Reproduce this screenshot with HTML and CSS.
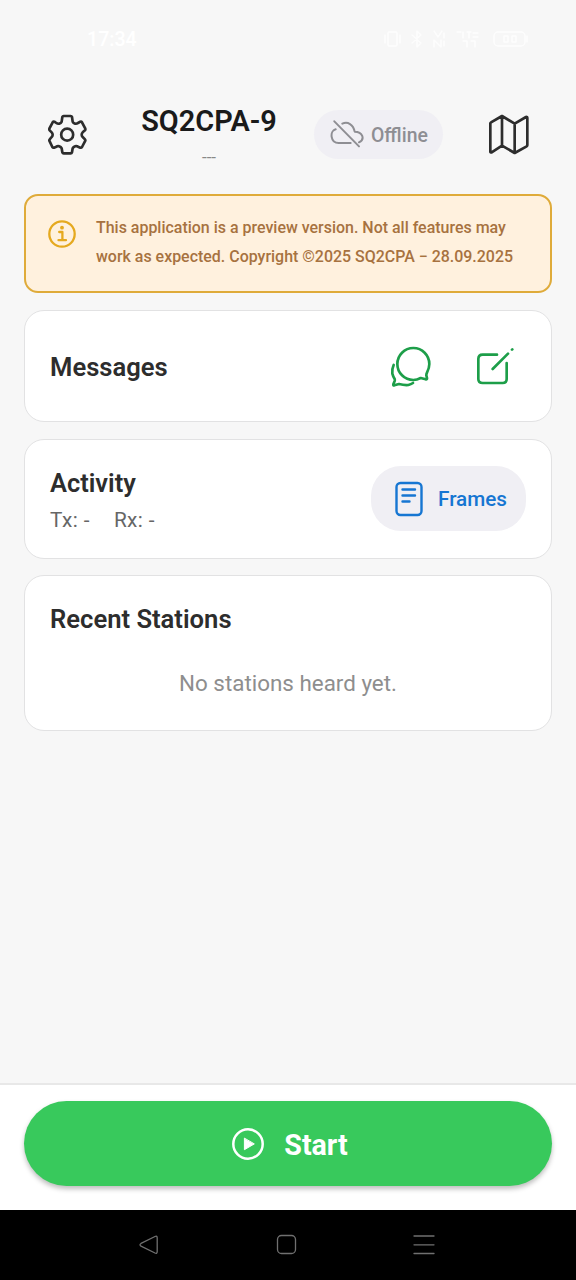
FILE: index.html
```html
<!DOCTYPE html>
<html lang="en">
<head>
<meta charset="utf-8">
<title>SQ2CPA-9</title>
<link rel="stylesheet" href="styles.css">
</head>
<body>
<div class="status">
  <span class="clock">17:34</span>
  <svg class="status-icons" width="150" height="24" viewBox="0 0 150 24" fill="none" stroke="currentColor" stroke-width="1.4">
    <rect x="8" y="5" width="9" height="14" rx="1"/><path d="M5 8v8M20 8v8M32 8l9 8-4 4V4l4 4-9 8"/>
    <path d="M54 4l4 6 4-6M54 20v-7l7 7v-7M64 6v5M64 14v5M77 5h4M83 5v6M87 5h4M89 5v6M93 6h5M93 10h5M83 14h4v6M91 14h4v6"/>
    <rect x="114" y="5" width="31" height="14" rx="4"/><path d="M147 9v6M124 9v6h4V9zM132 9v6h4V9z"/>
  </svg>
</div>
<header class="header">
  <svg class="gear" width="41" height="42" viewBox="51 71 123 126">
    <path d="M101 77H122Q125 77 126 80L128 94Q130 99 135 100Q140 101 144 98L151 94Q154 93 156 96L166 115Q167 118 165 120L158 126Q155 129 155 133Q155 137 158 140L165 147Q167 149 166 151L156 170Q154 173 151 172L144 169Q140 166 135 168Q130 169 128 174L126 186Q125 189 122 189H101Q98 189 97 186L95 174Q93 169 88 168Q83 166 79 169L72 172Q69 173 67 170L58 151Q57 149 59 147L65 140Q68 137 68 133Q68 129 65 126L59 120Q57 118 58 115L68 96Q70 93 73 94L79 98Q83 101 88 100Q93 99 95 94L97 80Q98 77 101 77Z"/>
    <circle cx="111.500" cy="133" r="18"/>
  </svg>
  <div class="identity"><h1 class="callsign">SQ2CPA-9</h1><span class="dashes">---</span></div>
  <div class="offline">
    <svg width="34" height="30" viewBox="90 91 102 90">
      <path d="M107 119C88 124 91 160 116 160H152M127 102C143 95 160 104 164 126C188 126 196 149 177 158M103 95L177 170"/>
    </svg>
    <span>Offline</span>
  </div>
  <svg class="map" width="42" height="42" viewBox="565 71 126 126">
    <path d="M572 99Q572 97 574 96L607 77L645 100L679 80Q683 79 683 83V165Q683 167 681 168L645 188L607 166L576 186Q572 187 572 184ZM607 77V166M645 100V188"/>
  </svg>
</header>
<main class="content">
  <section class="notice">
    <svg class="info" width="28" height="28" viewBox="0 0 28 28"><circle cx="14" cy="14" r="12.700"/><path d="M11.200 12h3.200v8M10.500 20.200h7.500"/><circle class="dot" cx="14" cy="7.700" r="1.900"/></svg>
    <p>This application is a preview version. Not all features may<br>work as expected. Copyright ©2025 SQ2CPA − 28.09.2025</p>
  </section>
  <section class="card messages">
    <h2>Messages</h2>
    <div class="actions">
      <svg width="42" height="42" viewBox="63 43 126 126">
        <path d="M174 123Q181 109 181 97A48 48 0 1 0 133 145Q144 145 155 139L170 143Q175 144 174 139L172 131Q172 127 174 123M74 100Q68 113 70 126Q72 134 77 142Q78 145 77 148L73 158Q72 162 76 161L90 157Q105 161 118 160Q126 158 132 154"/>
      </svg>
      <svg width="42" height="42" viewBox="317 47 126 126">
        <path d="M383 73H340Q327 73 327 86V146Q327 158 340 158H400Q412 158 412 146V98M370 116L416 70M428 58L429 57"/>
      </svg>
    </div>
  </section>
  <section class="card activity">
    <div class="summary"><h2>Activity</h2><div class="counts"><span>Tx: -</span><span>Rx: -</span></div></div>
    <div class="frames">
      <svg width="28" height="36" viewBox="0 0 28 36"><rect x="1.500" y="2" width="25" height="32" rx="4"/><path d="M7.500 8.500h12.500M7.500 14.500h12.500M7.500 20.500h7"/></svg>
      <span>Frames</span>
    </div>
  </section>
  <section class="card stations"><h2>Recent Stations</h2><p>No stations heard yet.</p></section>
</main>
<footer class="footer">
  <div class="start">
    <svg width="32" height="32" viewBox="0 0 32 32"><circle cx="16" cy="16" r="14.700"/><path d="M12.400 10.500v11.200l9.600-5.600z"/></svg>
    <span>Start</span>
  </div>
</footer>
<nav class="nav">
  <svg width="330" height="70" viewBox="0 0 330 70"><path d="M21 33.400L35 26.500Q37.200 25.500 37.200 28V41.500Q37.200 44 35 43L21 36.200Q19 34.900 21 33.400Z"/><rect x="157.500" y="25.500" width="18" height="18" rx="4"/><path d="M294 26h20M294 34.800h20M294 43.500h20"/></svg>
</nav>
</body>
</html>
```

FILE: styles.css
```css
* { box-sizing: border-box; }
body {
  margin: 0;
  height: 1280px;
  display: flex;
  flex-direction: column;
  background: #f7f7f7;
  color: #2d2d2d;
  font-family: Roboto, "Noto Sans", sans-serif;
}
h1, h2, p { margin: 0; }
svg { display: block; flex: none; fill: none; stroke-linecap: round; stroke-linejoin: round; }
.status {
  height: 76px;
  padding: 2px 46px 0 87px;
  display: flex;
  align-items: center;
  justify-content: space-between;
  color: #fff;
}
.status-icons { opacity: .85; }
.clock { font-size: 19.6px; font-weight: 500; }
.header { height: 118px; padding: 0 46px 0 47px; display: flex; align-items: flex-start; }
.gear, .map { stroke: #2d2d2d; stroke-width: 8; margin-top: 38px; }
.identity { width: 136px; margin: 27px 0 0 53px; display: flex; flex-direction: column; align-items: center; }
.callsign { font-size: 28.9px; line-height: 37px; font-weight: 600; color: #1a1a1a; white-space: nowrap; }
.dashes { font-size: 17px; line-height: 20px; margin-top: 7px; color: #888; }
.offline {
  width: 129px;
  height: 49px;
  margin: 34px 0 0 37px;
  padding: 1px 0 0 16px;
  display: flex;
  align-items: center;
  gap: 7px;
  border-radius: 25px;
  background: #f0eff4;
  color: #8e8e93;
  font-size: 19.4px;
  font-weight: 500;
  white-space: nowrap;
}
.offline svg { stroke: #8e8e93; stroke-width: 6; }
.map { margin-left: auto; }
.content { flex: 1; padding: 0 24px; }
.notice {
  height: 99px;
  border: 2px solid #dfab3a;
  border-radius: 14px;
  background: #fff1de;
  padding: 17px 0 0 22px;
  display: flex;
  gap: 20px;
  color: #a77240;
  font-size: 15.96px;
  line-height: 29px;
  font-weight: 500;
  white-space: nowrap;
}
.info { margin-top: 7px; stroke: #e5a91f; stroke-width: 2.3; }
.info .dot { fill: #e5a91f; stroke: none; }
.card {
  border: 1px solid #e2e2e3;
  border-radius: 20px;
  background: #fff;
  margin-top: 17px;
  padding: 0 25px;
}
.card h2 { font-size: 25.6px; line-height: 34px; font-weight: 600; white-space: nowrap; }
.messages { height: 112px; display: flex; align-items: center; justify-content: space-between; }
.actions { display: flex; gap: 43px; padding: 1px 9px 0 0; }
.messages h2 { padding-top: 2px; }
.actions svg { stroke: #1d9e49; stroke-width: 8; }
.activity { height: 120px; display: flex; align-items: flex-start; justify-content: space-between; }
.summary { padding-top: 26px; }
.card.activity h2 { font-size: 25.4px; }
.counts { display: flex; gap: 24px; margin-top: 5px; color: #666; font-size: 20.8px; line-height: 30px; letter-spacing: .4px; }
.frames {
  width: 155px;
  height: 65px;
  margin-top: 26px;
  border-radius: 30px;
  background: #f0eff4;
  display: flex;
  align-items: center;
  padding-left: 24px;
  gap: 15px;
  color: #1676d2;
  font-size: 20.7px;
  font-weight: 500;
}
.frames svg { stroke: #1676d2; stroke-width: 2.4; }
.frames span { padding-top: 1px; }
.stations { height: 156px; margin-top: 16px; padding-top: 26px; }
.stations p { margin-top: 33px; text-align: center; font-size: 22.4px; line-height: 28px; color: #8e8e8e; }
.footer { height: 127px; border-top: 2px solid #e8e8e8; padding: 16px 24px 0; background: #fff; }
.start {
  height: 85px;
  border-radius: 43px;
  background: #38c95c;
  box-shadow: 0 3px 5px rgba(0, 0, 0, .26);
  display: flex;
  align-items: center;
  justify-content: center;
  gap: 20px;
  padding-left: 4px;
  color: #fff;
  font-size: 28.6px;
  font-weight: 700;
}
.start svg { stroke: #fff; stroke-width: 2.5; }
.start span { padding-top: 2px; }
.start path { fill: #fff; stroke-width: 1; }
.nav { height: 70px; padding-left: 120px; background: #000; }
.nav svg { stroke: #707070; stroke-width: 1.3; }
```
